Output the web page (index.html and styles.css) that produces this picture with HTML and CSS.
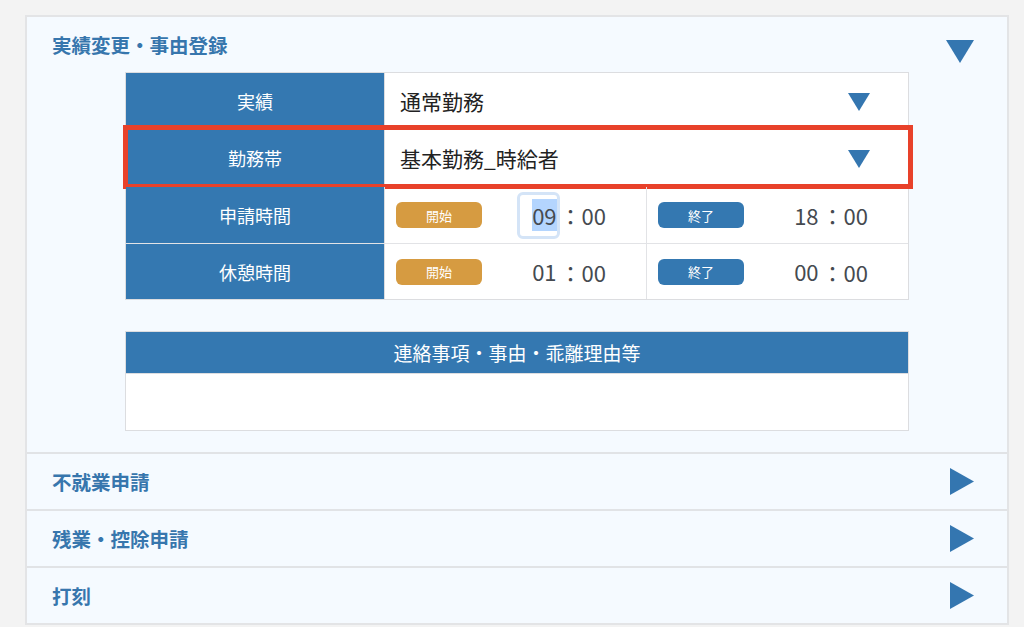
FILE: index.html
```html
<!DOCTYPE html>
<html lang="ja">
<head>
<meta charset="utf-8">
<title>実績変更・事由登録</title>
<link rel="stylesheet" href="styles.css">
</head>
<body>
<div class="panel">
  <section class="sec sec-open">
    <div class="sec-head">
      <h2 class="sec-title">実績変更・事由登録</h2>
      <svg class="tri-down" width="28" height="23" viewBox="0 0 28 23"><polygon points="0,0 28,0 14,23" fill="#3476b0"/></svg>
    </div>
    <div class="sec-body">
      <div class="form-table">
        <div class="row row-1">
          <div class="label">実績</div>
          <div class="value select">
            <span class="val-text">通常勤務</span>
            <svg class="sel-arrow" width="22" height="18" viewBox="0 0 22 18"><polygon points="0,0 22,0 11,18" fill="#3476b0"/></svg>
          </div>
        </div>
        <div class="row row-2">
          <div class="label">勤務帯</div>
          <div class="value select">
            <span class="val-text">基本勤務_時給者</span>
            <svg class="sel-arrow" width="22" height="18" viewBox="0 0 22 18"><polygon points="0,0 22,0 11,18" fill="#3476b0"/></svg>
          </div>
          <div class="highlight"></div>
        </div>
        <div class="row row-3">
          <div class="label">申請時間</div>
          <div class="value split">
            <div class="half">
              <span class="btn btn-start">開始</span>
              <span class="time"><span class="hh hh-focus"><span class="sel">09</span></span><span class="colon">：</span><span class="mm">00</span></span>
            </div>
            <div class="half">
              <span class="btn btn-end">終了</span>
              <span class="time"><span class="hh">18</span><span class="colon">：</span><span class="mm">00</span></span>
            </div>
          </div>
        </div>
        <div class="row row-4">
          <div class="label">休憩時間</div>
          <div class="value split">
            <div class="half">
              <span class="btn btn-start">開始</span>
              <span class="time"><span class="hh">01</span><span class="colon">：</span><span class="mm">00</span></span>
            </div>
            <div class="half">
              <span class="btn btn-end">終了</span>
              <span class="time"><span class="hh">00</span><span class="colon">：</span><span class="mm">00</span></span>
            </div>
          </div>
        </div>
      </div>
      <div class="comment">
        <div class="comment-head">連絡事項・事由・乖離理由等</div>
        <div class="comment-body"></div>
      </div>
    </div>
  </section>
  <section class="sec">
    <div class="sec-head closed">
      <h2 class="sec-title">不就業申請</h2>
      <svg class="tri-right" width="24" height="27" viewBox="0 0 24 27"><polygon points="0,0 24,13.5 0,27" fill="#3476b0"/></svg>
    </div>
  </section>
  <section class="sec">
    <div class="sec-head closed">
      <h2 class="sec-title">残業・控除申請</h2>
      <svg class="tri-right" width="24" height="27" viewBox="0 0 24 27"><polygon points="0,0 24,13.5 0,27" fill="#3476b0"/></svg>
    </div>
  </section>
  <section class="sec">
    <div class="sec-head closed">
      <h2 class="sec-title">打刻</h2>
      <svg class="tri-right" width="24" height="27" viewBox="0 0 24 27"><polygon points="0,0 24,13.5 0,27" fill="#3476b0"/></svg>
    </div>
  </section>
</div>
</body>
</html>
```

FILE: styles.css
```css
* { box-sizing: border-box; }

html, body {
  margin: 0;
  padding: 0;
  background: #f3f3f3;
  font-family: "Noto Sans CJK JP", "Noto Sans", sans-serif;
  height: 627px;
  overflow: hidden;
}

body {
  padding: 15px 0 0 25px;
}

.panel {
  width: 984px;
  background: #f5faff;
  border: 2px solid #e3e4e6;
}

.sec + .sec {
  border-top: 2px solid #e1e3e6;
}

.sec-head {
  display: flex;
  justify-content: space-between;
  align-items: flex-start;
  height: 55px;
  padding: 0 33px 0 25px;
}

.sec-title {
  margin: 0;
  font-size: 19.5px;
  font-weight: 700;
  color: #3776ad;
  line-height: 55px;
}

.tri-down {
  margin-top: 23px;
}

.sec-head.closed {
  height: 55px;
  align-items: center;
}

.sec-body {
  padding: 0 0 21px 98px;
}

.form-table {
  width: 784px;
  border: 1px solid #dcdde0;
  background: #fff;
}

.row {
  position: relative;
  display: flex;
  border-bottom: 1px solid #e2e3e6;
}

.row-1 { height: 56px; }
.row-2 { height: 58px; }
.row-3 { height: 57px; }
.row-4 { height: 55px; border-bottom: none; }

.label {
  width: 259px;
  flex: none;
  background: #3478b1;
  color: #fff;
  font-size: 18px;
  display: flex;
  align-items: center;
  justify-content: center;
  border-right: 1px solid #dcdde0;
}

.value {
  flex: 1;
  display: flex;
  align-items: center;
}

.select {
  justify-content: space-between;
  padding: 0 38px 0 15px;
}

.val-text {
  font-size: 21px;
  color: #222;
}

.sel-arrow {
  margin-top: 2px;
}

.highlight {
  position: absolute;
  left: -3px;
  top: -4px;
  right: -5px;
  bottom: -3px;
  border: 5px solid #e8412a;
  pointer-events: none;
}

.split {
  align-items: stretch;
}

.half {
  flex: 1;
  display: flex;
  align-items: center;
  justify-content: space-between;
  padding: 0 40px 0 11px;
}

.half:first-child {
  border-right: 1px solid #e2e3e6;
}

.btn {
  width: 86px;
  height: 26px;
  border-radius: 6px;
  color: #fff;
  font-size: 13px;
  display: flex;
  align-items: center;
  justify-content: center;
}

.btn-start {
  background: #d69b41;
}

.btn-end {
  background: #3478b1;
}

.time {
  font-size: 22px;
  color: #454a50;
  display: flex;
  align-items: center;
}

.hh {
  display: inline-block;
  padding: 4px 0 4px 12px;
  border: 3px solid transparent;
  border-radius: 6px;
  line-height: 33px;
}

.hh-focus {
  border-color: #d4e4f7;
}

.sel {
  background: #b4d5fe;
}

.comment {
  width: 784px;
  margin-top: 31px;
  border: 1px solid #dcdde0;
  background: #fff;
}

.comment-head {
  height: 42px;
  background: #3478b1;
  color: #fff;
  font-size: 19px;
  display: flex;
  align-items: center;
  justify-content: center;
  border-bottom: 1px solid #dcdde0;
}

.comment-body {
  height: 56px;
}
```
